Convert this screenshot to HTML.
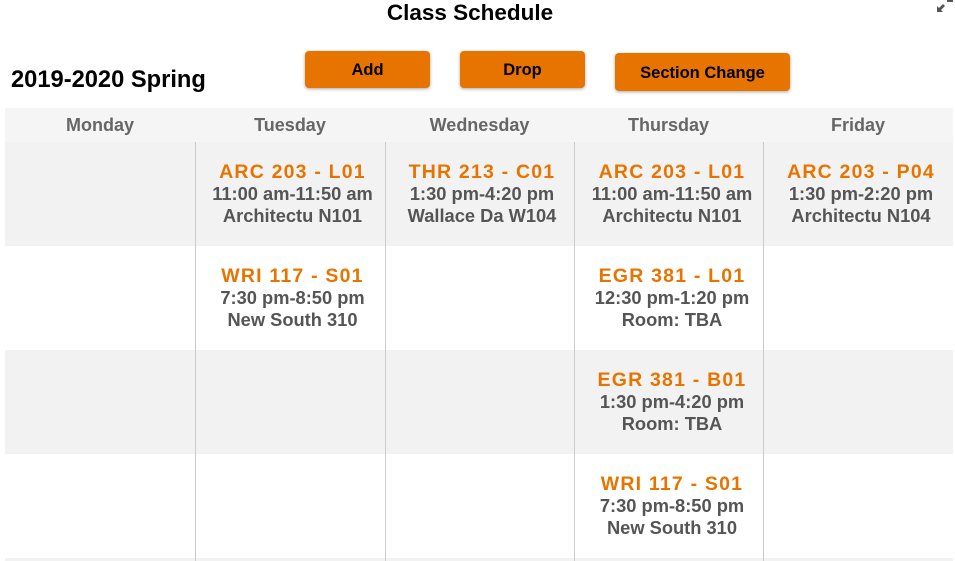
<!DOCTYPE html>
<html><head><style>
*{margin:0;padding:0;box-sizing:border-box}
body{width:955px;height:561px;background:#fff;font-family:"Liberation Sans",Arial,sans-serif;position:relative;overflow:hidden}
h1{position:absolute;top:0;left:0;width:940px;text-align:center;font-size:22.5px;font-weight:bold;line-height:26px;color:#000}
.term{position:absolute;left:11px;top:67px;font-size:23.7px;font-weight:bold;color:#000}
.btn{position:absolute;background:#e87400;border-radius:4px;box-shadow:0 1px 3px rgba(0,0,0,.35);font-size:16.5px;font-weight:bold;color:#000;text-align:center}
.hdr{position:absolute;left:5px;top:108px;width:948px;height:34px;background:#f5f5f5}
.hdr div{position:absolute;top:0;height:34px;line-height:34px;text-align:center;font-size:18px;font-weight:bold;color:#666}
.row{position:absolute;left:5px;width:948px;height:104px}
.g{background:#f2f2f2}
.vl{position:absolute;top:142px;height:419px;width:1px;background:#ccc}
.c{position:absolute;text-align:center;font-size:18.3px;font-weight:bold;color:#555;line-height:22px}
.c b{display:block;color:#e87400;font-size:19.5px;letter-spacing:1.2px}
.ic{position:absolute;left:936px;top:0}
</style></head><body>
<h1>Class Schedule</h1>
<svg class="ic" width="18" height="13" viewBox="0 0 18 13"><path d="M1 12 L1 6 L3 8 L7 4 L9 6 L5 10 L7 12 Z" fill="#555"/><path d="M11 1 L17 1" stroke="#555" stroke-width="2"/></svg>
<div class="term">2019-2020 Spring</div>
<div class="btn" style="left:305px;top:51px;width:125px;height:37px;line-height:39px">Add</div>
<div class="btn" style="left:460px;top:51px;width:125px;height:37px;line-height:39px">Drop</div>
<div class="btn" style="left:615px;top:53px;width:175px;height:38px;line-height:41px">Section Change</div>
<div class="hdr">
<div style="left:0;width:190px">Monday</div>
<div style="left:190px;width:190px">Tuesday</div>
<div style="left:380px;width:189px">Wednesday</div>
<div style="left:569px;width:189px">Thursday</div>
<div style="left:758px;width:190px">Friday</div>
</div>
<div class="row g" style="top:142px"></div>
<div class="row" style="top:246px"></div>
<div class="row g" style="top:350px"></div>
<div class="row" style="top:454px"></div>
<div class="row g" style="top:558px;height:3px"></div>
<div class="vl" style="left:195px"></div>
<div class="vl" style="left:385px"></div>
<div class="vl" style="left:574px"></div>
<div class="vl" style="left:763px"></div>
<div class="c" style="left:198px;width:189px;top:161px"><b>ARC 203 - L01</b>11:00 am-11:50 am<br>Architectu N101</div>
<div class="c" style="left:388px;width:188px;top:161px"><b>THR 213 - C01</b>1:30 pm-4:20 pm<br>Wallace Da W104</div>
<div class="c" style="left:578px;width:188px;top:161px"><b>ARC 203 - L01</b>11:00 am-11:50 am<br>Architectu N101</div>
<div class="c" style="left:766px;width:190px;top:161px"><b>ARC 203 - P04</b>1:30 pm-2:20 pm<br>Architectu N104</div>
<div class="c" style="left:198px;width:189px;top:265px"><b>WRI 117 - S01</b>7:30 pm-8:50 pm<br>New South 310</div>
<div class="c" style="left:578px;width:188px;top:265px"><b>EGR 381 - L01</b>12:30 pm-1:20 pm<br>Room: TBA</div>
<div class="c" style="left:578px;width:188px;top:369px"><b>EGR 381 - B01</b>1:30 pm-4:20 pm<br>Room: TBA</div>
<div class="c" style="left:578px;width:188px;top:473px"><b>WRI 117 - S01</b>7:30 pm-8:50 pm<br>New South 310</div>
</body></html>
